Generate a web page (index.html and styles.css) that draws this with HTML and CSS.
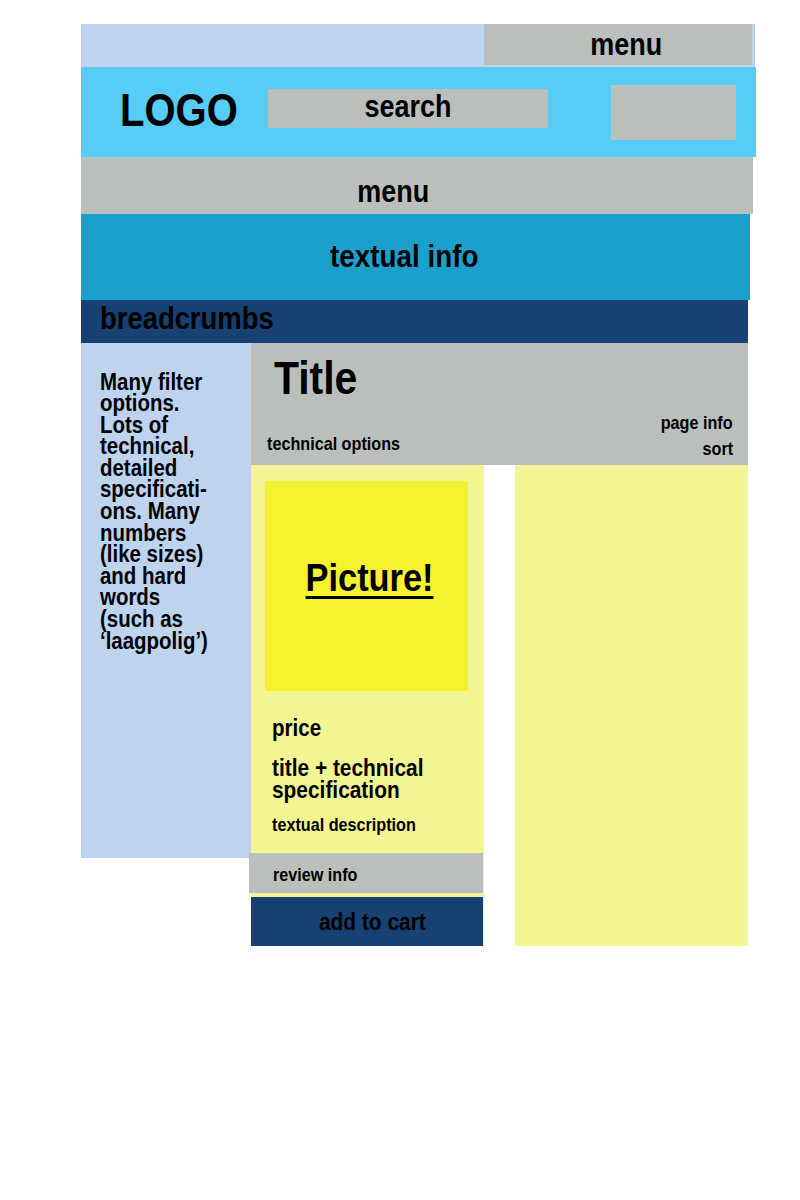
FILE: index.html
```html
<!DOCTYPE html>
<html lang="en">
<head>
<meta charset="utf-8">
<title>Wireframe</title>
<link rel="stylesheet" href="styles.css">
</head>
<body>
<div class="page">
  <div class="topbar">
    <div class="topmenu"><span class="cx">menu</span></div>
  </div>
  <header class="header">
    <div class="logo"><span class="cx cx-l">LOGO</span></div>
    <div class="search"><span class="cx">search</span></div>
    <div class="spacer"></div>
    <div class="cartbox"></div>
  </header>
  <nav class="menubar"><span class="cx">menu</span></nav>
  <div class="info"><span class="cx">textual info</span></div>
  <div class="crumbs"><span class="cx cx-l">breadcrumbs</span></div>
  <div class="content">
    <aside class="sidebar"><span class="cx cx-l">Many filter<br>options.<br>Lots of<br>technical,<br>detailed<br>specificati-<br>ons. Many<br>numbers<br>(like sizes)<br>and hard<br>words<br>(such as<br>‘laagpolig’)</span></aside>
    <main class="main">
      <div class="titlebar">
        <h1 class="title"><span class="cx cx-l">Title</span></h1>
        <div class="techopts"><span class="cx cx-l">technical options</span></div>
        <div class="pageinfo">
          <div class="pi"><span class="cx cx-r">page info</span></div>
          <div class="sort"><span class="cx cx-r">sort</span></div>
        </div>
      </div>
      <div class="products">
        <div class="card">
          <div class="picture"><span class="cx pictext">Picture!</span></div>
          <div class="price"><span class="cx cx-l">price</span></div>
          <div class="ptitle"><span class="cx cx-l">title + technical<br>specification</span></div>
          <div class="desc"><span class="cx cx-l">textual description</span></div>
          <div class="review"><span class="cx cx-l">review info</span></div>
          <div class="addcart"><span class="cx">add to cart</span></div>
        </div>
        <div class="card card-empty"></div>
      </div>
    </main>
  </div>
</div>
</body>
</html>
```

FILE: styles.css
```css
html, body {
  margin: 0;
  padding: 0;
  background: #ffffff;
}
body {
  font-family: "Liberation Sans", Arial, sans-serif;
  font-weight: bold;
  color: #000000;
}
/* condensed lettering */
.cx {
  display: inline-block;
  transform: scaleX(0.87);
  transform-origin: center;
}
.cx-l {
  transform-origin: left center;
}
.cx-r {
  transform-origin: right center;
}
.page {
  margin-left: 81px;
  padding-top: 24px;
  width: 676px;
}
.topbar {
  width: 674px;
  height: 43px;
  background: #bdd3ee;
  display: flex;
  justify-content: flex-end;
}
.topmenu {
  width: 268px;
  height: 41px;
  margin-right: 3px;
  background: #bbbfbc;
  box-sizing: border-box;
  padding-top: 5px;
  padding-left: 16px;
  text-align: center;
  font-size: 31px;
  line-height: 1;
}
.header {
  width: 675px;
  height: 90px;
  background: #57ccf4;
  display: flex;
  align-items: flex-start;
}
.logo {
  flex: none;
  width: 187px;
  box-sizing: border-box;
  padding-left: 39px;
  margin-top: 20px;
  font-size: 46px;
  line-height: 1;
}
.search {
  flex: none;
  width: 280px;
  height: 39px;
  margin-top: 22px;
  background: #bbbfbc;
  box-sizing: border-box;
  padding-top: 2px;
  text-align: center;
  font-size: 31px;
  line-height: 1;
}
.spacer {
  flex: 1;
}
.cartbox {
  flex: none;
  width: 125px;
  height: 55px;
  margin-top: 18px;
  margin-right: 20px;
  background: #bbbfbc;
}
.menubar {
  width: 672px;
  height: 57px;
  background: #bbbfbc;
  box-sizing: border-box;
  padding-top: 19px;
  padding-right: 47px;
  text-align: center;
  font-size: 31px;
  line-height: 1;
}
.info {
  width: 669px;
  height: 86px;
  background: #1ba0cc;
  box-sizing: border-box;
  padding-top: 26px;
  padding-right: 22px;
  text-align: center;
  font-size: 32px;
  line-height: 1;
}
.crumbs {
  width: 667px;
  height: 43px;
  background: #164172;
  box-sizing: border-box;
  padding-top: 3px;
  padding-left: 19px;
  font-size: 31.5px;
  line-height: 1;
}
.content {
  display: flex;
  align-items: flex-start;
  width: 667px;
}
.sidebar {
  width: 170px;
  height: 515px;
  flex: none;
  background: #bdd3ee;
  box-sizing: border-box;
  padding-top: 28.5px;
  padding-left: 19px;
  font-size: 23.5px;
  line-height: 21.6px;
}
.main {
  width: 497px;
  flex: none;
}
.titlebar {
  height: 122px;
  background: #bbbfbc;
  display: grid;
  grid-template-columns: 1fr auto;
  grid-template-rows: auto 1fr;
}
.title {
  grid-column: 1 / 3;
  grid-row: 1;
  margin: 11px 0 0 23px;
  font-size: 47px;
  line-height: 1;
  font-weight: bold;
}
.techopts {
  grid-column: 1;
  grid-row: 2;
  align-self: end;
  margin: 0 0 11px 16px;
  font-size: 18.6px;
  line-height: 1;
}
.pageinfo {
  grid-column: 2;
  grid-row: 2;
  align-self: end;
  text-align: right;
  padding-right: 15px;
  padding-bottom: 6px;
  font-size: 18.6px;
  line-height: 1;
}
.sort {
  margin-top: 7.4px;
}
.products {
  display: flex;
  gap: 31px;
}
.card {
  width: 233px;
  height: 481px;
  background: #f2f592;
  display: flex;
  flex-direction: column;
}
.card-empty {
  width: 233px;
}
.picture {
  width: 203px;
  height: 210px;
  margin: 16px 0 0 14px;
  background: #f5f22f;
  box-sizing: border-box;
  padding-top: 77px;
  padding-left: 6px;
  text-align: center;
  font-size: 39.5px;
  line-height: 1;
}
.pictext {
  text-decoration: underline;
  text-decoration-thickness: 3px;
  text-underline-offset: 5px;
}
.price {
  margin: 25.5px 0 0 21px;
  font-size: 23.6px;
  line-height: 1;
}
.ptitle {
  margin: 17px 0 0 21px;
  font-size: 24px;
  line-height: 22px;
}
.desc {
  margin: 15.3px 0 0 21px;
  font-size: 18.6px;
  line-height: 1;
}
.review {
  margin-top: auto;
  margin-left: -2px;
  width: 234px;
  height: 40px;
  margin-bottom: 4px;
  background: #bbbfbc;
  box-sizing: border-box;
  padding: 12.7px 0 0 24px;
  font-size: 18.6px;
  line-height: 1;
}
.addcart {
  width: 232px;
  height: 49px;
  background: #164172;
  box-sizing: border-box;
  padding: 13.3px 0 0 11px;
  text-align: center;
  font-size: 24px;
  line-height: 1;
}
```
